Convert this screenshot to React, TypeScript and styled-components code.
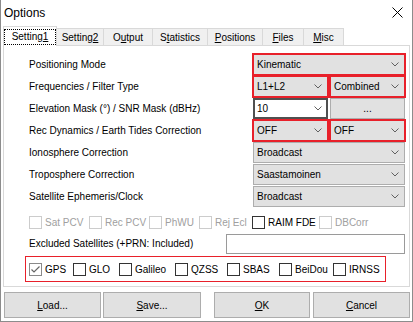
import React from 'react';
import styled, { createGlobalStyle } from 'styled-components';

const palette = {
  face: '#f0f0f0',
  white: '#ffffff',
  control: '#e1e1e1',
  controlBorder: '#adadad',
  tabBorder: '#d9d9d9',
  frame: '#8c8c8c',
  red: '#e8202a',
  disabled: '#a0a0a0',
  disabledBox: '#cccccc',
  text: '#000000',
};

const GlobalStyle = createGlobalStyle`
  html, body {
    margin: 0;
    padding: 0;
    background: ${palette.white};
  }
  body {
    font-family: "Liberation Sans", Arial, sans-serif;
    font-size: 10px;
    color: ${palette.text};
  }
`;

const Window = styled.div`
  width: 413px;
  height: 322px;
  box-sizing: border-box;
  display: flex;
  flex-direction: column;
  background: ${palette.white};
  border: 1px solid ${palette.frame};
  border-top: none;
`;

const TitleBar = styled.div`
  height: 24px;
  display: flex;
  align-items: center;
  justify-content: space-between;
  padding: 0 9px 0 3px;
  background: ${palette.white};
`;

const Title = styled.div`
  font-size: 12px;
  line-height: 14px;
  padding-top: 2px;
`;

const Body = styled.div`
  display: flex;
  flex-direction: column;
  padding: 2px 2px 3px;
`;

const TabStrip = styled.div`
  height: 19px;
  display: flex;
  align-items: flex-end;
`;

const Tab = styled.div<{ $active?: boolean; $w: number }>`
  position: relative;
  box-sizing: border-box;
  width: ${(p) => p.$w}px;
  height: ${(p) => (p.$active ? 20 : 17)}px;
  margin-left: -1px;
  margin-bottom: ${(p) => (p.$active ? -1 : 0)}px;
  z-index: ${(p) => (p.$active ? 2 : 1)};
  display: flex;
  align-items: stretch;
  justify-content: center;
  background: ${(p) => (p.$active ? palette.white : palette.face)};
  border: 1px solid ${palette.tabBorder};
  border-bottom: none;
  line-height: 14px;
  padding-top: ${(p) => (p.$active ? 0 : 2)}px;

  &:first-child {
    margin-left: 0;
  }
`;

const FocusRect = styled.div`
  flex: 1;
  margin: 2px 0 1px 0;
  border: 1px dotted #000;
  display: flex;
  align-items: center;
  justify-content: center;
`;

const TabText = styled.span`
  display: flex;
  align-items: center;
`;

const Key = styled.span`
  text-decoration: underline;
`;

const Page = styled.div`
  height: 242px;
  box-sizing: border-box;
  background: ${palette.white};
  border: 1px solid ${palette.tabBorder};
  padding: 8px 4px 0 25px;
  display: flex;
  flex-direction: column;
`;

const FormGrid = styled.div`
  display: grid;
  grid-template-columns: 1fr 152px;
  grid-auto-rows: 21px;
  row-gap: 1px;
`;

const Label = styled.div<{ $grow?: boolean }>`
  align-self: center;
  white-space: nowrap;
  padding-bottom: 1px;
  flex: ${(p) => (p.$grow ? 1 : 'none')};
`;

const Pair = styled.div`
  display: grid;
  grid-template-columns: 75px 75px;
  column-gap: 2px;
`;

const ComboBox = styled.div<{ $edit?: boolean; $marked?: boolean }>`
  height: 21px;
  box-sizing: border-box;
  display: flex;
  align-items: center;
  padding: 0 ${(p) => (p.$edit ? 4 : 5)}px 0 ${(p) => (p.$edit ? 2 : 3)}px;
  background: ${(p) => (p.$edit ? palette.white : palette.control)};
  border: ${(p) => (p.$edit ? '2px solid #505050' : `1px solid ${palette.controlBorder}`)};
  outline: ${(p) => (p.$marked ? `2px solid ${palette.red}` : 'none')};
  outline-offset: -1px;
`;

const ComboText = styled.span`
  flex: 1;
  white-space: nowrap;
`;

const Button = styled.div<{ $w?: number }>`
  box-sizing: border-box;
  width: ${(p) => (p.$w ? `${p.$w}px` : 'auto')};
  display: flex;
  align-items: center;
  justify-content: center;
  background: ${palette.control};
  border: 1px solid ${palette.controlBorder};
`;

const CheckRow = styled.div`
  height: 13px;
  margin-top: 9px;
  display: flex;
  align-items: center;
`;

const CheckItem = styled.div<{ $w?: number; $off?: boolean }>`
  width: ${(p) => (p.$w ? `${p.$w}px` : 'auto')};
  display: flex;
  align-items: center;
  color: ${(p) => (p.$off ? palette.disabled : palette.text)};
  white-space: nowrap;
`;

const Box = styled.div<{ $tone: 'on' | 'off' | 'dim' }>`
  width: 13px;
  height: 13px;
  box-sizing: border-box;
  margin-right: 3px;
  background: ${palette.white};
  border: 1px solid
    ${(p) => (p.$tone === 'off' ? palette.disabledBox : p.$tone === 'dim' ? '#8a8a8a' : '#333333')};
  display: flex;
  align-items: center;
  justify-content: center;
`;

const ExcludedRow = styled.div`
  height: 20px;
  margin-top: 5px;
  display: flex;
  align-items: center;
`;

const TextInput = styled.div`
  width: 179px;
  height: 20px;
  box-sizing: border-box;
  background: ${palette.white};
  border: 1px solid #9a9a9a;
`;

const SystemsBox = styled.div`
  width: 361px;
  height: 26px;
  box-sizing: border-box;
  margin: 2px 0 0 -4px;
  padding-left: 3px;
  border: 1px solid ${palette.red};
  display: flex;
  align-items: center;
`;

const ButtonRow = styled.div`
  height: 26px;
  margin-top: 5px;
  margin-left: 1px;
  display: flex;
`;

const Spacer = styled.div<{ $w: number }>`
  width: ${(p) => p.$w}px;
`;

const Accel = ({ text, at }: { text: string; at: number }) => (
  <>
    {text.slice(0, at)}
    <Key>{text[at]}</Key>
    {text.slice(at + 1)}
  </>
);

const Chevron = () => (
  <svg width="8" height="5" viewBox="0 0 8 5">
    <polyline points="0.5,0.5 4,4 7.5,0.5" fill="none" stroke="#606060" strokeWidth="1" />
  </svg>
);

const Combo = ({ value, edit, marked }: { value: string; edit?: boolean; marked?: boolean }) => (
  <ComboBox $edit={edit} $marked={marked}>
    <ComboText>{value}</ComboText>
    <Chevron />
  </ComboBox>
);

const Check = ({
  label,
  w,
  off,
  checked,
  dim,
}: {
  label: string;
  w?: number;
  off?: boolean;
  checked?: boolean;
  dim?: boolean;
}) => (
  <CheckItem $w={w} $off={off}>
    <Box $tone={off ? 'off' : dim ? 'dim' : 'on'}>
      {checked && (
        <svg width="11" height="11" viewBox="0 0 11 11">
          <polyline points="1.5,5.5 4,8 9.5,2.5" fill="none" stroke="#666666" strokeWidth="1.2" />
        </svg>
      )}
    </Box>
    {label}
  </CheckItem>
);

const tabs = [
  { text: 'Setting1', at: 7, w: 54 },
  { text: 'Setting2', at: 7, w: 48 },
  { text: 'Output', at: 1, w: 50 },
  { text: 'Statistics', at: 1, w: 56 },
  { text: 'Positions', at: 0, w: 56 },
  { text: 'Files', at: 0, w: 42 },
  { text: 'Misc', at: 0, w: 41 },
];

const options = [
  { label: 'Sat PCV', w: 60, off: true },
  { label: 'Rec PCV', w: 60, off: true },
  { label: 'PhWU', w: 50, off: true },
  { label: 'Rej Ecl', w: 53, off: true },
  { label: 'RAIM FDE', w: 67 },
  { label: 'DBCorr', off: true },
];

const systems = [
  { label: 'GPS', w: 44, checked: true },
  { label: 'GLO', w: 46 },
  { label: 'Galileo', w: 56 },
  { label: 'QZSS', w: 52 },
  { label: 'SBAS', w: 52 },
  { label: 'BeiDou', w: 54 },
  { label: 'IRNSS' },
];

const App = () => {
  return (
    <>
      <GlobalStyle />
      <Window>
        <TitleBar>
          <Title>Options</Title>
          <svg width="11" height="11" viewBox="0 0 11 11">
            <path d="M0.5 0.5 L10.5 10.5 M10.5 0.5 L0.5 10.5" stroke="#000" strokeWidth="1" />
          </svg>
        </TitleBar>
        <Body>
          <TabStrip>
            {tabs.map((t, idx) =>
              idx === 0 ? (
                <Tab key={t.text} $active $w={t.w}>
                  <FocusRect>
                    <Accel text={t.text} at={t.at} />
                  </FocusRect>
                </Tab>
              ) : (
                <Tab key={t.text} $w={t.w}>
                  <TabText>
                    <Accel text={t.text} at={t.at} />
                  </TabText>
                </Tab>
              )
            )}
          </TabStrip>
          <Page>
            <FormGrid>
              <Label>Positioning Mode</Label>
              <Combo value="Kinematic" marked />

              <Label>Frequencies / Filter Type</Label>
              <Pair>
                <Combo value="L1+L2" marked />
                <Combo value="Combined" marked />
              </Pair>

              <Label>Elevation Mask (°) / SNR Mask (dBHz)</Label>
              <Pair>
                <Combo value="10" edit />
                <Button>...</Button>
              </Pair>

              <Label>Rec Dynamics / Earth Tides Correction</Label>
              <Pair>
                <Combo value="OFF" marked />
                <Combo value="OFF" marked />
              </Pair>

              <Label>Ionosphere Correction</Label>
              <Combo value="Broadcast" />

              <Label>Troposphere Correction</Label>
              <Combo value="Saastamoinen" />

              <Label>Satellite Ephemeris/Clock</Label>
              <Combo value="Broadcast" />
            </FormGrid>

            <CheckRow>
              {options.map((o) => (
                <Check key={o.label} label={o.label} w={o.w} off={o.off} />
              ))}
            </CheckRow>

            <ExcludedRow>
              <Label $grow>Excluded Satellites (+PRN: Included)</Label>
              <TextInput />
            </ExcludedRow>

            <SystemsBox>
              {systems.map((s) => (
                <Check key={s.label} label={s.label} w={s.w} checked={s.checked} dim={s.checked} />
              ))}
            </SystemsBox>
          </Page>
          <ButtonRow>
            <Button $w={97}>
              <Accel text="Load..." at={0} />
            </Button>
            <Spacer $w={2} />
            <Button $w={98}>
              <Accel text="Save..." at={0} />
            </Button>
            <Spacer $w={13} />
            <Button $w={96}>
              <Accel text="OK" at={0} />
            </Button>
            <Spacer $w={3} />
            <Button $w={97}>
              <Accel text="Cancel" at={0} />
            </Button>
          </ButtonRow>
        </Body>
      </Window>
    </>
  );
};

export default App;
